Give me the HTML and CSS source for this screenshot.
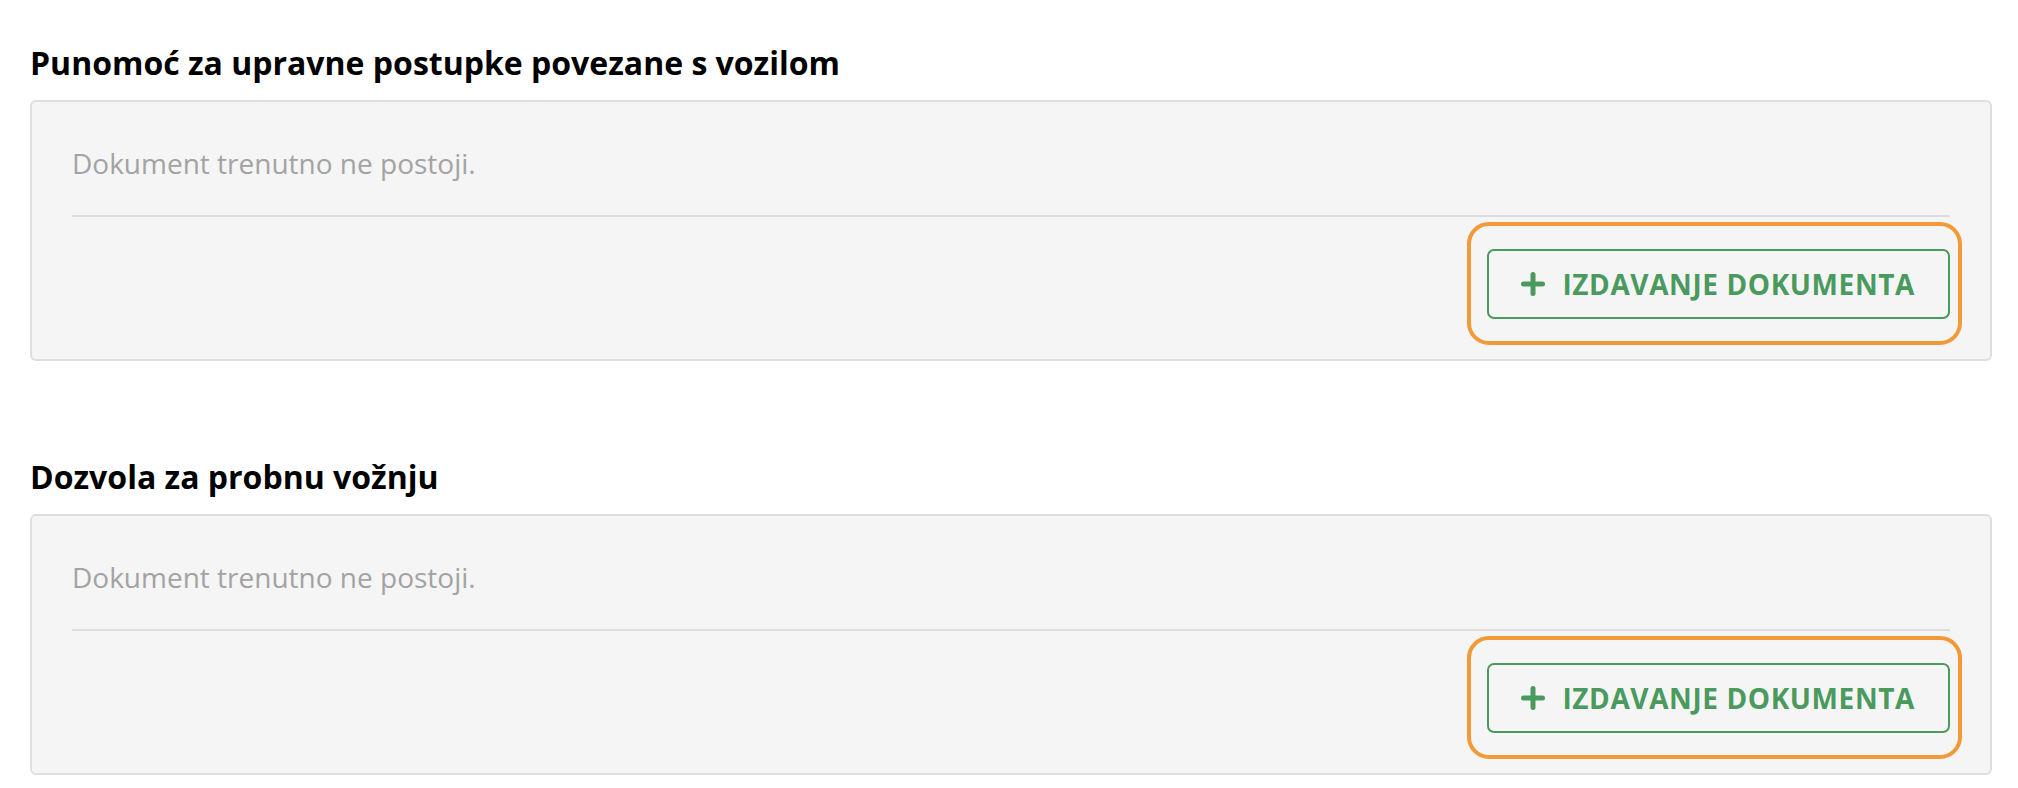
FILE: index.html
```html
<!DOCTYPE html>
<html lang="hr">
<head>
<meta charset="utf-8">
<title>Dokumenti</title>
<link rel="stylesheet" href="styles.css">
</head>
<body>
<main class="page">
  <section class="doc-section">
    <h2 class="doc-title">Punomoć za upravne postupke povezane s vozilom</h2>
    <div class="doc-card">
      <p class="doc-empty">Dokument trenutno ne postoji.</p>
      <div class="doc-divider"></div>
      <div class="doc-actions">
        <div class="highlight">
          <button class="btn-issue" type="button">
            <svg class="btn-icon" viewBox="0 0 24 24" width="24" height="24" aria-hidden="true"><path d="M12 2.5v19M2.5 12h19" fill="none" stroke="currentColor" stroke-width="5" stroke-linecap="round"/></svg>
            <span>IZDAVANJE DOKUMENTA</span>
          </button>
        </div>
      </div>
    </div>
  </section>
  <section class="doc-section">
    <h2 class="doc-title">Dozvola za probnu vožnju</h2>
    <div class="doc-card">
      <p class="doc-empty">Dokument trenutno ne postoji.</p>
      <div class="doc-divider"></div>
      <div class="doc-actions">
        <div class="highlight">
          <button class="btn-issue" type="button">
            <svg class="btn-icon" viewBox="0 0 24 24" width="24" height="24" aria-hidden="true"><path d="M12 2.5v19M2.5 12h19" fill="none" stroke="currentColor" stroke-width="5" stroke-linecap="round"/></svg>
            <span>IZDAVANJE DOKUMENTA</span>
          </button>
        </div>
      </div>
    </div>
  </section>
</main>
</body>
</html>
```
FILE: styles.css
```css
* { box-sizing: border-box; }
html, body { margin: 0; padding: 0; background: #ffffff; }
body { font-family: "Open Sans", "Noto Sans", sans-serif; color: #000; }

.page {
  padding: 43px 26px 0 30px;
  display: flex;
  flex-direction: column;
  gap: 96px;
}

.doc-title {
  margin: 0 0 17px 0;
  font-size: 32px;
  line-height: 40px;
  font-weight: 700;
  color: #000;
}

.doc-card {
  background: #f5f5f5;
  border: 2px solid #dedede;
  border-radius: 6px;
  padding: 40px;
  display: flex;
  flex-direction: column;
}

.doc-empty {
  margin: 0;
  font-size: 28px;
  line-height: 42px;
  color: #a3a3a3;
}

.doc-divider {
  height: 2px;
  background: #dcdcdc;
  margin-top: 31px;
}

.doc-actions {
  display: flex;
  justify-content: flex-end;
  margin-top: 32px;
}

.highlight { position: relative; }
.highlight::after {
  content: "";
  position: absolute;
  top: -27px;
  bottom: -26px;
  left: -20px;
  right: -12px;
  border: 4px solid #f39a38;
  border-radius: 22px;
  pointer-events: none;
}

.btn-issue {
  height: 70px;
  display: flex;
  align-items: center;
  gap: 17px;
  padding: 0 33px 0 32px;
  background: transparent;
  border: 2px solid #4a9a5e;
  border-radius: 7px;
  color: #4a9a5e;
  font-family: "Open Sans", "Noto Sans", sans-serif;
  font-size: 28px;
  font-weight: 700;
  letter-spacing: 0.6px;
  cursor: pointer;
}

.btn-icon { display: block; flex: none; }
```
